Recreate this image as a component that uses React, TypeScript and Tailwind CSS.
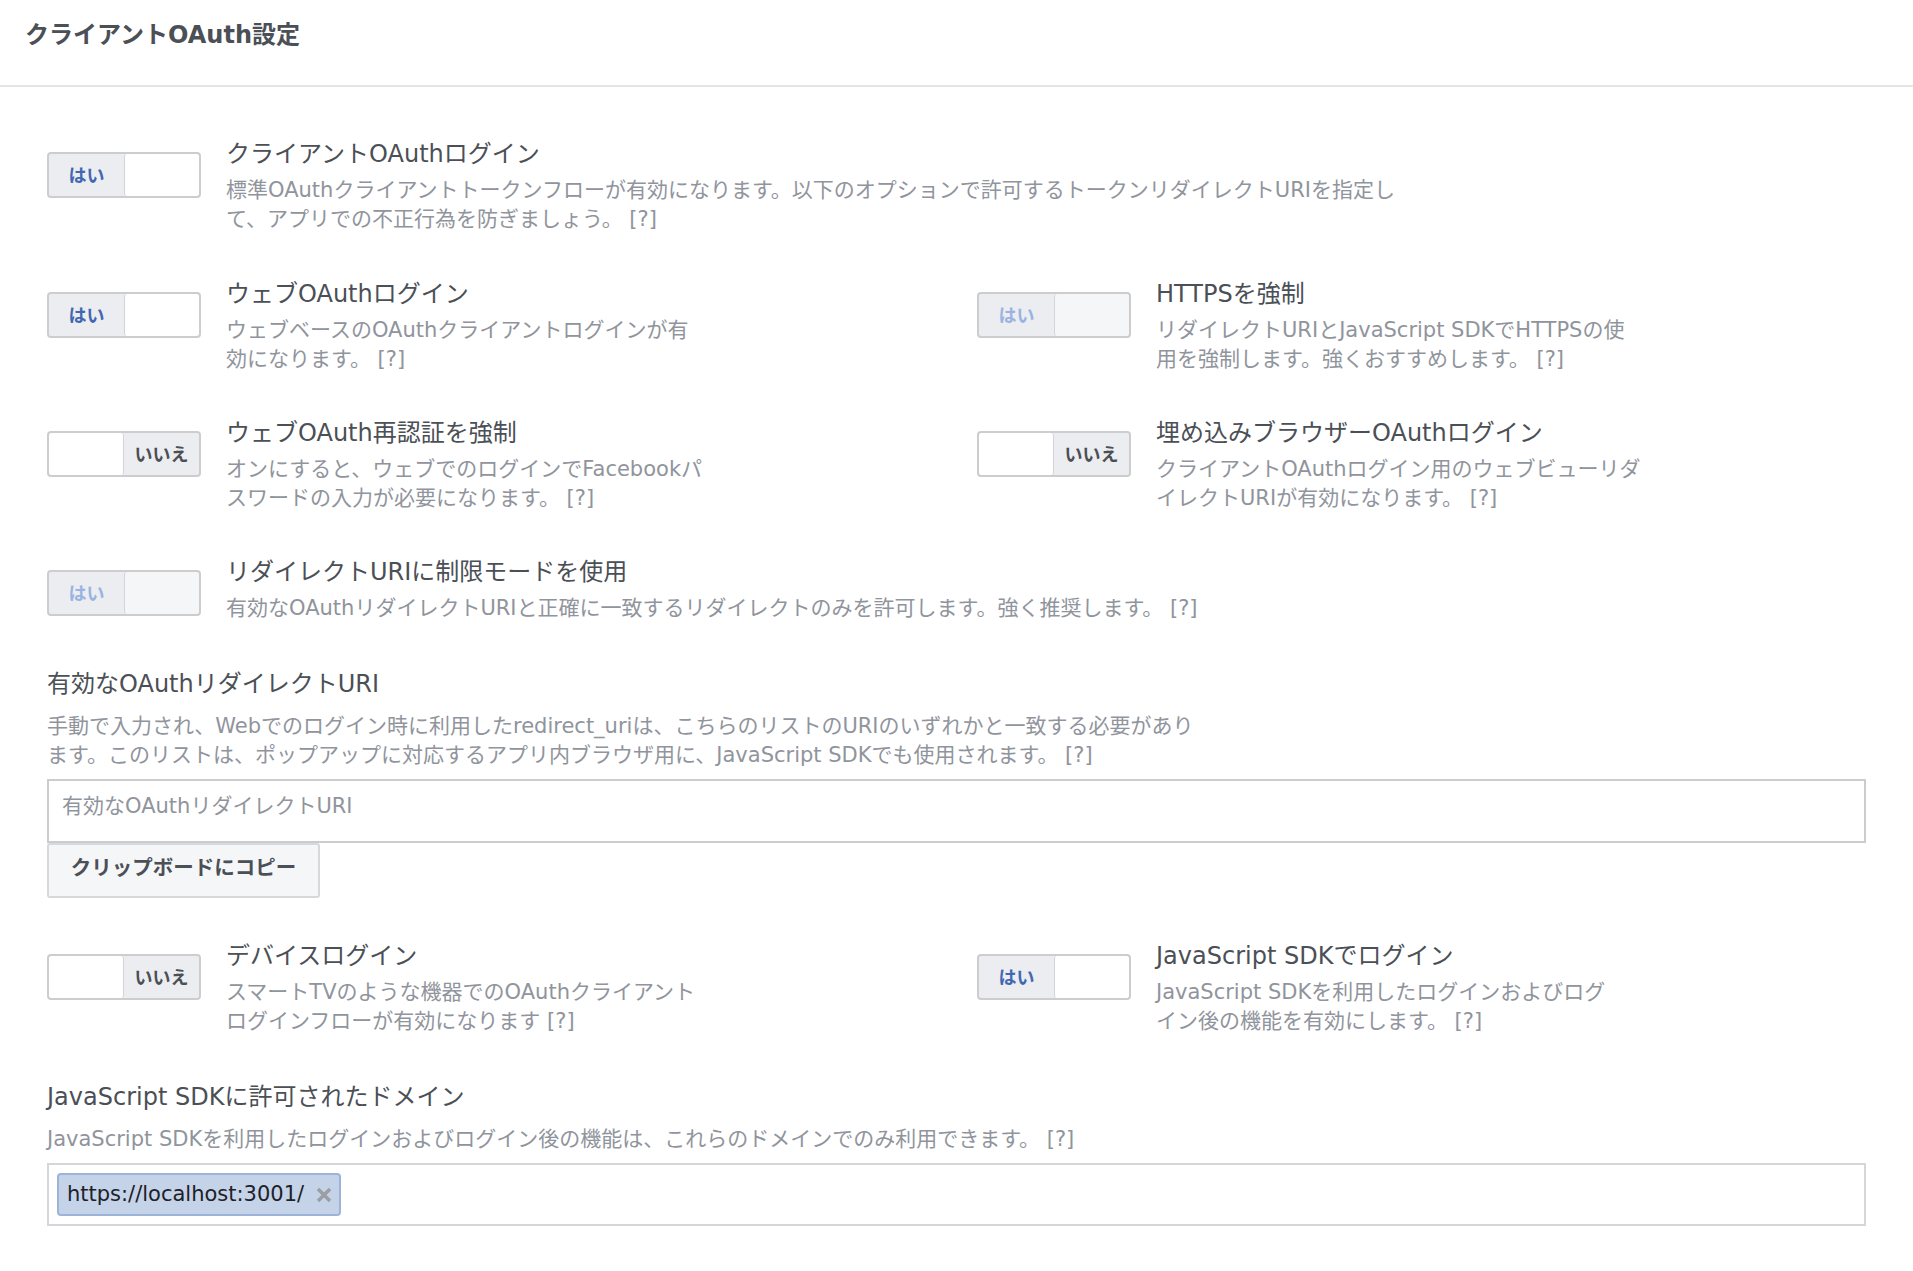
import type { ReactNode } from 'react'

interface ToggleProps {
  on: boolean
  disabled?: boolean
}

function Toggle({ on, disabled }: ToggleProps) {
  const knob = (
    <div
      className={`w-[75px] h-full rounded-[3px] ${disabled ? 'bg-[#f5f6f7]' : 'bg-white'} ${
        on ? 'border-l border-[#d3d4d7]' : 'border-r border-[#d3d4d7]'
      }`}
    />
  )
  return (
    <div className="w-[154px] h-[46px] rounded-[4px] border-2 border-[#cdcdcd] bg-[#ebedf0] flex overflow-hidden">
      {on ? (
        <>
          <div
            className={`flex-1 flex items-center justify-center text-[18px] font-bold ${
              disabled ? 'text-[#9ab3e2]' : 'text-[#4267b2]'
            }`}
          >
            はい
          </div>
          {knob}
        </>
      ) : (
        <>
          {knob}
          <div className="flex-1 flex items-center justify-center text-[18px] font-bold text-[#4b4f56]">
            いいえ
          </div>
        </>
      )}
    </div>
  )
}

interface SettingProps {
  on: boolean
  disabled?: boolean
  title: string
  desc: ReactNode
  wide?: boolean
}

function Setting({ on, disabled, title, desc, wide }: SettingProps) {
  return (
    <div className="flex">
      <div className="mt-[12px] shrink-0">
        <Toggle on={on} disabled={disabled} />
      </div>
      <div className={`ml-[25px] ${wide ? 'w-[1300px]' : 'w-[540px]'}`}>
        <div className="text-[24px] leading-[29px] text-[#4b4f56]">{title}</div>
        <div className="mt-[7px] text-[21px] leading-[29px] text-[#90949c]">{desc}</div>
      </div>
    </div>
  )
}

function TwoCol({ left, right }: { left: ReactNode; right: ReactNode }) {
  return (
    <div className="flex">
      <div className="w-[930px] shrink-0">{left}</div>
      <div className="flex-1">{right}</div>
    </div>
  )
}

export default function App() {
  return (
    <div className="min-h-screen bg-white font-['DejaVu_Sans','Noto_Sans_CJK_JP',sans-serif]">
      {/* Header */}
      <div className="h-[87px] border-b-2 border-[#e5e5e5] px-[25px] pt-[20px]">
        <h1 className="text-[24px] leading-[30px] font-bold text-[#4b4f56]">クライアントOAuth設定</h1>
      </div>

      <div className="px-[47px] pt-[53px] pb-[40px]">
        <div className="mb-[46px]">
          <Setting
            on
            wide
            title="クライアントOAuthログイン"
            desc={
              <>
                標準OAuthクライアントトークンフローが有効になります。以下のオプションで許可するトークンリダイレクトURIを指定し
                <br />
                て、アプリでの不正行為を防ぎましょう。 [?]
              </>
            }
          />
        </div>

        <div className="mb-[45px]">
          <TwoCol
            left={
              <Setting
                on
                title="ウェブOAuthログイン"
                desc={
                  <>
                    ウェブベースのOAuthクライアントログインが有
                    <br />
                    効になります。 [?]
                  </>
                }
              />
            }
            right={
              <Setting
                on
                disabled
                title="HTTPSを強制"
                desc={
                  <>
                    リダイレクトURIとJavaScript SDKでHTTPSの使
                    <br />
                    用を強制します。強くおすすめします。 [?]
                  </>
                }
              />
            }
          />
        </div>

        <div className="mb-[45px]">
          <TwoCol
            left={
              <Setting
                on={false}
                title="ウェブOAuth再認証を強制"
                desc={
                  <>
                    オンにすると、ウェブでのログインでFacebookパ
                    <br />
                    スワードの入力が必要になります。 [?]
                  </>
                }
              />
            }
            right={
              <Setting
                on={false}
                title="埋め込みブラウザーOAuthログイン"
                desc={
                  <>
                    クライアントOAuthログイン用のウェブビューリダ
                    <br />
                    イレクトURIが有効になります。 [?]
                  </>
                }
              />
            }
          />
        </div>

        <div className="mb-[47px]">
          <Setting
            on
            disabled
            wide
            title="リダイレクトURIに制限モードを使用"
            desc="有効なOAuthリダイレクトURIと正確に一致するリダイレクトのみを許可します。強く推奨します。 [?]"
          />
        </div>

        {/* Valid OAuth redirect URIs */}
        <div className="mb-[44px]">
          <div className="text-[24px] leading-[29px] text-[#4b4f56]">有効なOAuthリダイレクトURI</div>
          <div className="mt-[13px] text-[21px] leading-[29px] text-[#90949c]">
            手動で入力され、Webでのログイン時に利用したredirect_uriは、こちらのリストのURIのいずれかと一致する必要があり
            <br />
            ます。このリストは、ポップアップに対応するアプリ内ブラウザ用に、JavaScript SDKでも使用されます。 [?]
          </div>
          <input
            className="mt-[9px] block w-full h-[64px] border-2 border-[#cccccc] px-[13px] pb-[10px] text-[21px] text-[#1d2129] outline-none placeholder:text-[#90949c]"
            placeholder="有効なOAuthリダイレクトURI"
          />
          <button className="h-[55px] w-[273px] rounded-[3px] border-2 border-[#d6d8db] bg-[#f5f6f7] pb-[5px] text-[20.5px] font-bold text-[#4b4f56]">
            クリップボードにコピー
          </button>
        </div>

        <div className="mb-[47px]">
          <TwoCol
            left={
              <Setting
                on={false}
                title="デバイスログイン"
                desc={
                  <>
                    スマートTVのような機器でのOAuthクライアント
                    <br />
                    ログインフローが有効になります [?]
                  </>
                }
              />
            }
            right={
              <Setting
                on
                title="JavaScript SDKでログイン"
                desc={
                  <>
                    JavaScript SDKを利用したログインおよびログ
                    <br />
                    イン後の機能を有効にします。 [?]
                  </>
                }
              />
            }
          />
        </div>

        {/* JS SDK domains */}
        <div>
          <div className="text-[24px] leading-[29px] text-[#4b4f56]">JavaScript SDKに許可されたドメイン</div>
          <div className="mt-[13px] text-[21px] leading-[29px] text-[#90949c]">
            JavaScript SDKを利用したログインおよびログイン後の機能は、これらのドメインでのみ利用できます。 [?]
          </div>
          <div className="mt-[9px] h-[63px] border-2 border-[#d4d6da] px-[8px] pt-[8px]">
            <span className="inline-flex h-[43px] items-center gap-[12px] rounded-[4px] border-2 border-[#9db3d9] bg-[#c5d3e8] pl-[8px] pr-[7px]">
              <span className="text-[21px] text-[#1d2129]">https://localhost:3001/</span>
              <svg width="16" height="16" viewBox="0 0 16 16" className="text-[#9b9ea4]">
                <path d="M2 2 L14 14 M14 2 L2 14" stroke="currentColor" strokeWidth="3.5" />
              </svg>
            </span>
          </div>
        </div>
      </div>
    </div>
  )
}
